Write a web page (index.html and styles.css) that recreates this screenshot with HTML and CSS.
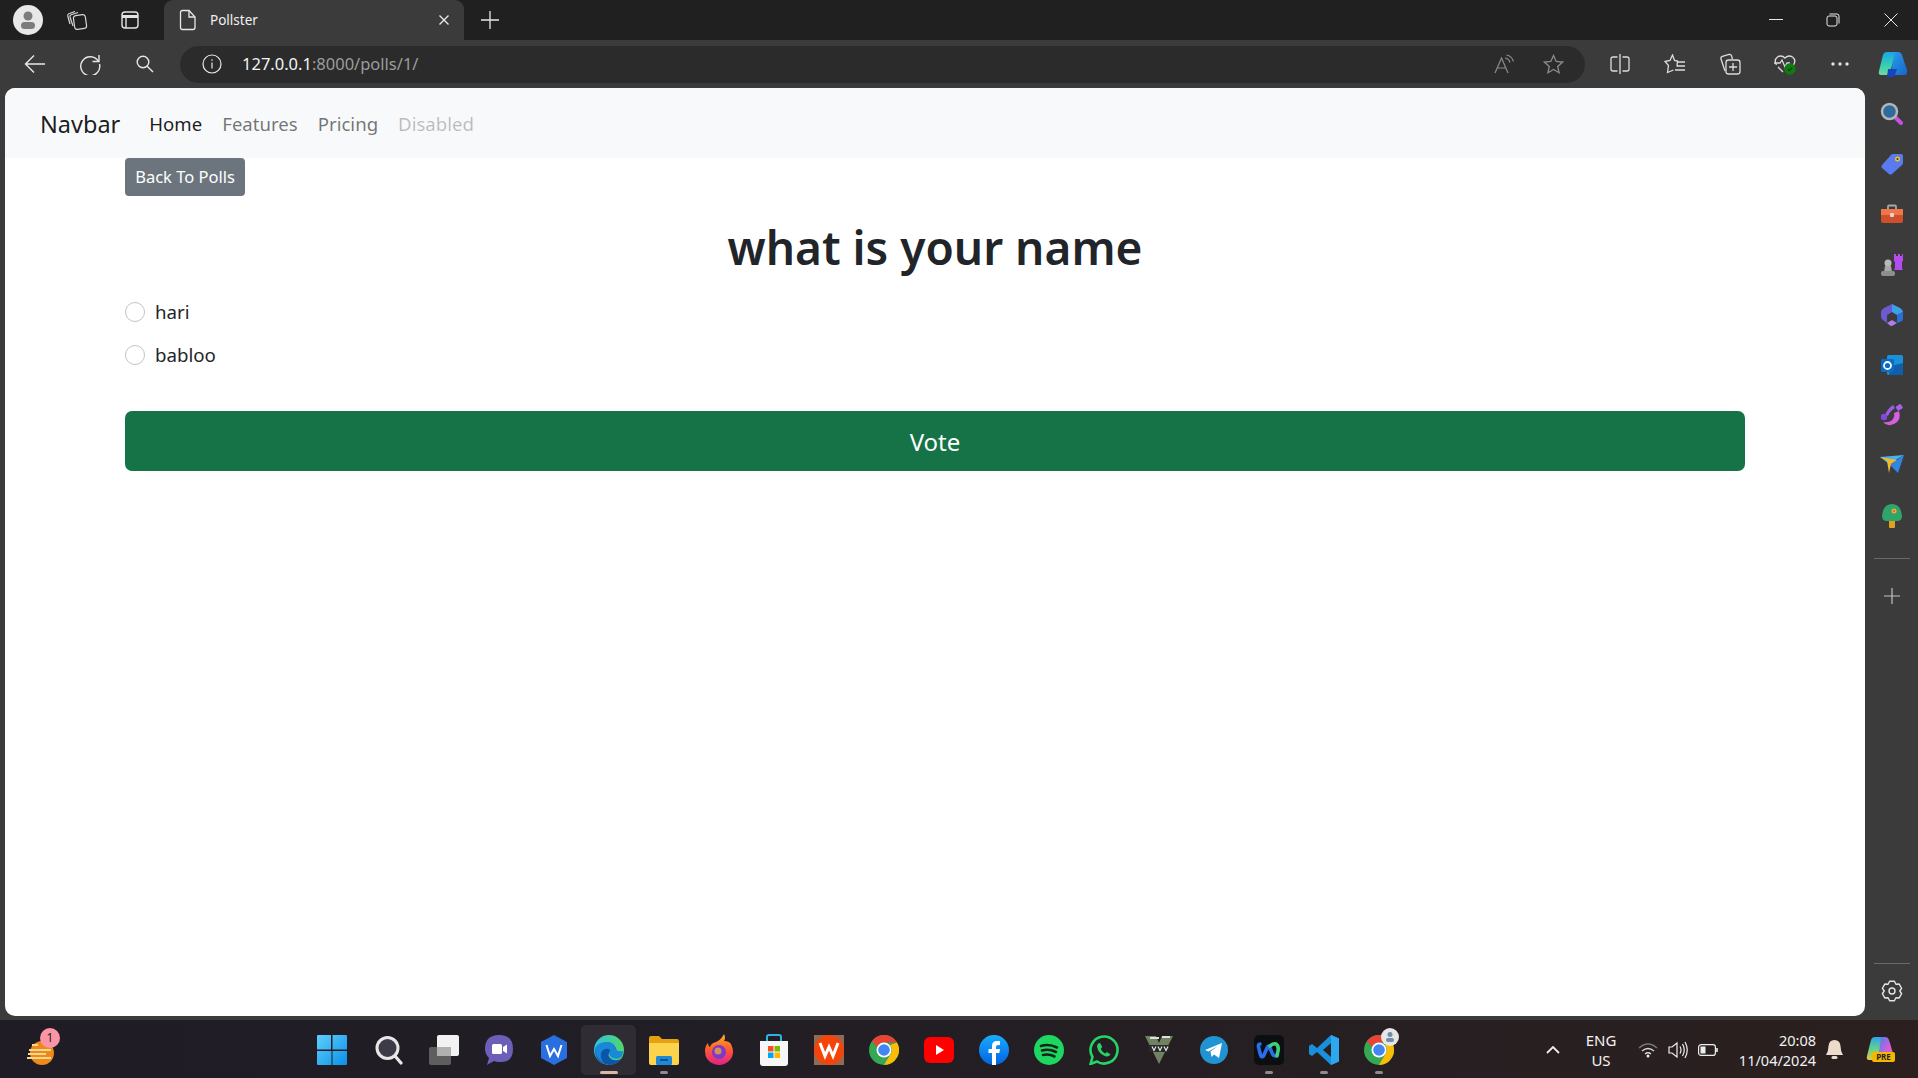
FILE: index.html

```html
<!DOCTYPE html>
<html lang="en">
<head>
  <meta charset="UTF-8" />
  <meta name="viewport" content="width=device-width, initial-scale=1.0" />
  <title>Pollster</title>
  <link rel="stylesheet" href="styles.css">
</head>
<body>
  <!-- browser title bar -->
  <div class="titlebar">
    <div class="cell w-avatar">
      <svg width="30" height="30" viewBox="0 0 30 30"><circle cx="15" cy="15" r="15" fill="#e8e8e8"/><circle cx="15" cy="11" r="4.5" fill="#7c7c7c"/><rect x="8" y="17" width="14" height="7" rx="3.5" fill="#7c7c7c"/></svg>
    </div>
    <div class="cell w-coll">
      <svg width="22" height="22" viewBox="0 0 22 22" fill="none" stroke="#d8d8d8" stroke-width="1.2"><rect x="8" y="6" width="12" height="14" rx="2.5" transform="rotate(-8 14 13)"/><path d="M7 17 4 8q-.4-1.800 1.200-2.300L12 3.500"/><path d="M4 15 1.800 7q-.4-1.600 1-2.200L9 2.500"/></svg>
    </div>
    <div class="cell w-tabs">
      <svg width="20" height="20" viewBox="0 0 20 20" fill="none" stroke="#e4e4e4" stroke-width="1.400"><rect x="2" y="2" width="16" height="16" rx="3"/><path d="M6 7v11" /><path d="M2 6.500h16" stroke-width="3"/></svg>
    </div>
    <div class="tab">
      <svg width="18" height="22" viewBox="0 0 18 22" fill="none" stroke="#e8e8e8" stroke-width="1.300"><path d="M3.500 1.500h6.500l6 6.500v10.500q0 2-2 2h-10.500q-2 0-2-2v-15q0-2 2-2z"/><path d="M10 1.500v6.500h6"/></svg>
      <span class="tab-title">Pollster</span>
      <svg class="tab-close" width="12" height="12" viewBox="0 0 12 12" stroke="#e8e8e8" stroke-width="1.400"><path d="M1.500 1.500l9 9M10.500 1.500l-9 9"/></svg>
    </div>
    <div class="cell w-plus">
      <svg width="18" height="18" viewBox="0 0 18 18" stroke="#e8e8e8" stroke-width="1.300"><path d="M9 0v18M0 9h18"/></svg>
    </div>
    <div class="window-btns">
      <div class="win-btn"><svg width="14" height="14" viewBox="0 0 14 14" stroke="#e8e8e8" stroke-width="1"><path d="M0 6.500h14"/></svg></div>
      <div class="win-btn"><svg width="14" height="14" viewBox="0 0 14 14" fill="none" stroke="#e8e8e8" stroke-width="1"><rect x="1" y="3" width="10" height="10" rx="2"/><path d="M3.500 1h7.500q2 0 2 2v7.500"/></svg></div>
      <div class="win-btn"><svg width="14" height="14" viewBox="0 0 14 14" stroke="#e8e8e8" stroke-width="1"><path d="M.5.500l13 13M13.500.500l-13 13"/></svg></div>
    </div>
  </div>

  <!-- address bar row -->
  <div class="toolbar">
    <div class="tool">
      <svg width="22" height="20" viewBox="0 0 22 20" fill="none" stroke="#e8e8e8" stroke-width="1.400"><path d="M21 10H1.500M10 1.500 1.500 10l8.500 8.500"/></svg>
    </div>
    <div class="tool">
      <svg width="22" height="22" viewBox="0 0 22 22" fill="none" stroke="#e8e8e8" stroke-width="1.400"><path d="M19.500 8.500A9.500 9.500 0 1 0 20.500 11"/><path d="M20 2v6.500h-6.500"/></svg>
    </div>
    <div class="tool">
      <svg width="18" height="18" viewBox="0 0 18 18" fill="none" stroke="#e8e8e8" stroke-width="1.400"><circle cx="7" cy="7" r="5.800"/><path d="M11.200 11.200 17 17"/></svg>
    </div>
    <div class="address">
      <svg width="20" height="20" viewBox="0 0 20 20" fill="none" stroke="#e8e8e8" stroke-width="1.200"><circle cx="10" cy="10" r="9"/><path d="M10 8.500v6M10 5.300v1.400"/></svg>
      <span class="url"><span class="url-host">127.0.0.1</span>:8000/polls/1/</span>
      <div class="address-right">
        <svg width="20" height="20" viewBox="0 0 20 20" fill="none" stroke="#8c8c8c" stroke-width="1.200"><path d="M1 19 7.500 4 14 19M3.500 14h8"/><path d="M11 4q4 .5 5 4.500M12.500 1q5.500 1 7 6.500"/></svg>
        <svg width="21" height="21" viewBox="0 0 21 21" fill="none" stroke="#8c8c8c" stroke-width="1.300"><path d="M10.500 1.500l2.700 6 6.300.6-4.800 4.300 1.400 6.400-5.600-3.300-5.600 3.300 1.400-6.400-4.800-4.300 6.300-.6z"/></svg>
      </div>
    </div>
    <div class="tool-group">
      <div class="tool">
        <svg width="20" height="20" viewBox="0 0 20 20" fill="none" stroke="#dcdcdc" stroke-width="1.300"><path d="M10 0v20M7.500 3H3q-2 0-2 2v10q0 2 2 2h4.500M12.500 3H17q2 0 2 2v10q0 2-2 2h-4.500"/></svg>
      </div>
      <div class="tool">
        <svg width="22" height="20" viewBox="0 0 22 20" fill="none" stroke="#dcdcdc" stroke-width="1.300"><path d="M13 12.500 13.500 7l-3-.5L8.500 1 6 6.500 1 7.500 4.500 11.500 3.500 18.500 9.500 16"/><path d="M13 8h8M13 12h8M11 16h10"/></svg>
      </div>
      <div class="tool">
        <svg width="22" height="22" viewBox="0 0 22 22" fill="none" stroke="#dcdcdc" stroke-width="1.300"><path d="M6 18 2 6q-.6-2 1.400-2.600L10 1.500q2-.5 2.600 1.500l.8 3"/><rect x="7" y="7" width="14" height="14" rx="2.500"/><path d="M14 10v8M10 14h8"/></svg>
      </div>
      <div class="tool">
        <svg width="22" height="22" viewBox="0 0 22 22" fill="none" stroke="#dcdcdc" stroke-width="1.300"><path d="M2.500 12q-3-5 1-8 4-2.500 7.500 1 3.500-3.500 7.500-1 4 3 1 8"/><path d="M0 10h6l2-3 3 7 2-4h3M4 14l5 5"/><circle cx="16" cy="16" r="5" fill="#107c10" stroke="#107c10"/><path d="M13.800 16l1.600 1.600 2.800-3" stroke="#0d3d0d"/></svg>
      </div>
      <div class="tool">
        <svg width="18" height="4" viewBox="0 0 18 4" fill="#e0e0e0"><circle cx="2" cy="2" r="1.700"/><circle cx="9" cy="2" r="1.700"/><circle cx="16" cy="2" r="1.700"/></svg>
      </div>
      <div class="tool last">
        <svg width="30" height="27" viewBox="0 0 30 27">
          <defs>
            <linearGradient id="cpA" x1="0" y1="0" x2="0" y2="1"><stop offset="0" stop-color="#1aa6e8"/><stop offset=".6" stop-color="#37d0b0"/><stop offset="1" stop-color="#7ad89a"/></linearGradient>
            <linearGradient id="cpB" x1="0" y1="0" x2="1" y2="1"><stop offset="0" stop-color="#2aa5f0"/><stop offset="1" stop-color="#1467d8"/></linearGradient>
          </defs>
          <path d="M9 1h9l-6 20q-1 3-4 3H3q-3 0-2-4L5 4q1-3 4-3z" fill="url(#cpA)"/>
          <path d="M16 1h4q3 0 4 3l5 15q1 5-3 5H13z" fill="url(#cpB)" opacity=".95"/>
          <path d="M10 18h9l-2 6q-1 2-3 2h-5z" fill="#1347c0"/>
        </svg>
      </div>
    </div>
  </div>

  <div class="middle">
    <div class="page">
      <nav class="navbar">
        <a class="navbar-brand" href="#">Navbar</a>
        <a class="nav-link active" href="#">Home</a>
        <a class="nav-link" href="#">Features</a>
        <a class="nav-link" href="#">Pricing</a>
        <a class="nav-link disabled" href="#">Disabled</a>
      </nav>
      <div class="container">
        <a class="btn-back" href="#">Back To Polls</a>
        <h1 class="question">what is your name</h1>
        <form class="poll-form">
          <label class="choice"><span class="radio"></span>hari</label>
          <label class="choice"><span class="radio"></span>babloo</label>
          <button class="btn-vote" type="button">Vote</button>
        </form>
      </div>
    </div>

    <!-- edge sidebar -->
    <aside class="sidebar">
      <div class="side-icon">
        <svg width="24" height="24" viewBox="0 0 24 24"><path d="M14 14l7 7" stroke="#c94fe0" stroke-width="4" stroke-linecap="round"/><circle cx="9.500" cy="9.500" r="7.500" fill="#2b6c9c" stroke="#b4b4b4" stroke-width="2.500"/></svg>
      </div>
      <div class="side-icon">
        <svg width="24" height="24" viewBox="0 0 24 24"><path d="M13 2h8q2 0 2 2v7q0 1-1 2L12 22q-1.500 1-3 0l-7-6q-1.500-1.500 0-3L11 3q1-1 2-1z" fill="#5a7af0"/><circle cx="17.500" cy="7" r="2.500" fill="#f5c518"/><circle cx="17.500" cy="7" r="1" fill="#333"/></svg>
      </div>
      <div class="side-icon">
        <svg width="24" height="20" viewBox="0 0 24 20"><path d="M8 5V2.500q0-1 1-1h6q1 0 1 1V5" fill="none" stroke="#a8a8a8" stroke-width="1.800"/><rect x="1" y="5" width="22" height="6" fill="#f0764a"/><path d="M1 11h22v6q0 2-2 2H3q-2 0-2-2z" fill="#cf4f2a"/><rect x="10" y="9" width="4" height="4" rx="1" fill="#d8d8d8"/></svg>
      </div>
      <div class="side-icon">
        <svg width="24" height="24" viewBox="0 0 24 24"><path d="M14 1h2v2h2V1h2v2h2V1h1v7l-1 1v6l1 2H14l1-2V9l-1-1z" fill="#b44cf0"/><circle cx="8" cy="10" r="3.500" fill="#b8b8b8"/><path d="M5 13h6l1 6H4z" fill="#a8a8a8"/><rect x="1" y="18" width="14" height="5" rx="2" fill="#8e8e8e"/></svg>
      </div>
      <div class="side-icon">
        <svg width="24" height="24" viewBox="0 0 24 24"><path d="M12 1l8 4q3 2 3 4l-6 3-5-3z" fill="#3aa0e8"/><path d="M23 9v7q0 2-3 3l-3 1v-8z" fill="#2d6fd8"/><path d="M4 5l8-4v8l-5 3v8l-3-2q-3-2-3-4V9q0-2 3-4z" fill="#6d5ad0"/><path d="M7 20l5-3 5 3-5 3q-1 0-2-.5z" fill="#b07ce8"/></svg>
      </div>
      <div class="side-icon">
        <svg width="24" height="24" viewBox="0 0 24 24"><rect x="7" y="2" width="16" height="20" rx="1.500" fill="#1a90d8"/><path d="M11 13l12-3v12H9z" fill="#0f5fa8"/><rect x="1" y="6" width="13" height="13" rx="1.500" fill="#0a6cc4"/><circle cx="7.500" cy="12.500" r="3.500" fill="none" stroke="#fff" stroke-width="1.800"/></svg>
      </div>
      <div class="side-icon">
        <svg width="24" height="24" viewBox="0 0 24 24"><path d="M5 12Q8 5 13 2l2 3q-5 3-7 8z" fill="#9a5ce8"/><path d="M19 8q3 9-5 13-7 3-11-2 7 1 10-3 2-3 1-6z" fill="#d860e0"/><circle cx="4" cy="14" r="3.200" fill="#8048e0"/><rect x="16" y="2" width="6" height="5" rx="1" fill="#a860f0" transform="rotate(-35 19 4)"/></svg>
      </div>
      <div class="side-icon">
        <svg width="24" height="20" viewBox="0 0 24 20"><path d="M0 2 24 0 9 9z" fill="#42b4f0"/><path d="M24 0 18 18 10 10z" fill="#2f86e6"/><path d="M0 2l7 4 2 12 2-9 6-4z" fill="#f4b82a"/></svg>
      </div>
      <div class="side-icon">
        <svg width="24" height="26" viewBox="0 0 24 26"><rect x="9" y="17" width="6" height="8" rx="1" fill="#e0a020"/><path d="M12 1q9 0 10 12 0 5-5 5H7q-5 0-5-5Q3 1 12 1z" fill="#2fa56c"/><circle cx="14" cy="8" r="2.500" fill="#f4a83a"/><circle cx="14" cy="8" r="1" fill="#e85a2a"/></svg>
      </div>
      <div class="side-divider"></div>
      <div class="side-icon">
        <svg width="16" height="16" viewBox="0 0 16 16" stroke="#c4c4c4" stroke-width="1.200"><path d="M8 0v16M0 8h16"/></svg>
      </div>
      <div class="side-bottom">
        <div class="side-divider"></div>
        <div class="side-icon">
          <svg width="22" height="22" viewBox="0 0 22 22" fill="none" stroke="#e4e4e4" stroke-width="1.400" stroke-linejoin="round"><circle cx="11" cy="11" r="3"/><path d="M8.600 1.300h4.800l1.500 2.950 3.300-.2 2.400 4.200L18.800 11l1.800 2.750-2.400 4.200-3.300-.2-1.500 2.950H8.600l-1.500-2.950-3.300.2-2.400-4.200L3.200 11 1.400 8.250l2.400-4.200 3.300.2z"/></svg>
        </div>
      </div>
    </aside>
  </div>

  <!-- windows taskbar -->
  <footer class="taskbar">
    <div class="weather">
      <svg width="34" height="32" viewBox="0 0 34 32"><circle cx="17" cy="19" r="12" fill="#ee8a1a"/><path d="M7 11h6M4 16h22M3 20h18M2 24h24" stroke="#f6d890" stroke-width="2.200"/></svg>
      <span class="weather-badge">1</span>
    </div>
    <div class="apps">
      <div class="app">
        <svg class="start-logo" width="30" height="30" viewBox="0 0 30 30"><defs><linearGradient id="win" x1="0" y1="0" x2="1" y2="1"><stop offset="0" stop-color="#5fd0fb"/><stop offset="1" stop-color="#0a8fe8"/></linearGradient></defs><path d="M0 1q0-1 1-1h13v14.500H0zM15.500 0H29q1 0 1 1v13.500H15.500zM0 16h14.500v14H1q-1 0-1-1zM15.500 16H30v13q0 1-1 1H15.500z" fill="url(#win)"/></svg>
      </div>
      <div class="app">
        <svg width="28" height="30" viewBox="0 0 28 30" fill="none"><circle cx="12.500" cy="13" r="10.500" fill="#3e3b48" stroke="#e8e8e8" stroke-width="3"/><path d="M20 21l6 7" stroke="#e8e8e8" stroke-width="3.200" stroke-linecap="round"/></svg>
      </div>
      <div class="app">
        <svg width="30" height="30" viewBox="0 0 30 30"><rect x="0" y="12" width="22" height="18" rx="2" fill="#5e5e5e"/><rect x="8" y="0" width="22" height="21" rx="2" fill="#f2f2f2"/><rect x="8" y="12" width="14" height="9" fill="#b0b0b0"/></svg>
      </div>
      <div class="app">
        <svg width="30" height="32" viewBox="0 0 30 32"><path d="M15 1q14 0 14 14T15 28q-3 0-5-1l-7 4 2-7Q1 20 1 15 1 1 15 1z" fill="#6b5fb8"/><rect x="8" y="10" width="10" height="10" rx="1.500" fill="#fff"/><path d="M19 13l4-2.500v9L19 17z" fill="#fff"/></svg>
      </div>
      <div class="app">
        <svg width="28" height="30" viewBox="0 0 28 30"><path d="M14 0l13 7v16l-13 7-13-7V7z" fill="#2a6fe0"/><path d="M6.500 10 10 21l4-7 4 7 3.500-11" fill="none" stroke="#fff" stroke-width="2"/></svg>
      </div>
      <div class="app active">
        <svg width="30" height="30" viewBox="0 0 30 30"><defs><linearGradient id="edgeA" x1="0" y1="0" x2="1" y2="0"><stop offset="0" stop-color="#2ec2e0"/><stop offset="1" stop-color="#53d66a"/></linearGradient></defs><circle cx="15" cy="15" r="15" fill="url(#edgeA)"/><path d="M1 15Q1 28 15 30q8 0 12-6-7 3-11-1-3-3 0-6 3-2 7 0Q21 7 13 7 4 8 1 15z" fill="#0d55a8"/><path d="M1 13Q5 6 14 7q6 1 8 7 1 3 7 2 0 5-3 7-5 2-9-1-3-3-1-7-2-2-5-1-3 1-4 4-1 6 3 10Q1 24 1 13z" fill="#1a87d8"/></svg>
      </div>
      <div class="app open">
        <svg width="30" height="30" viewBox="0 0 30 30"><path d="M0 3q0-2 2-2h8l3 3h15q2 0 2 2v3H0z" fill="#e8a010"/><path d="M0 8h30v20q0 2-2 2H2q-2 0-2-2z" fill="#fcd34d"/><rect x="7" y="21" width="16" height="9" rx="1.500" fill="#1e88d8"/><path d="M11 25h8" stroke="#0d3f70" stroke-width="1.500"/></svg>
      </div>
      <div class="app">
        <svg width="30" height="32" viewBox="0 0 30 32"><defs><linearGradient id="ffx" x1="0" y1="0" x2="0" y2="1"><stop offset="0" stop-color="#ffb020"/><stop offset=".5" stop-color="#ff5a30"/><stop offset="1" stop-color="#e0208c"/></linearGradient></defs><path d="M27 10q5 10-2 17-7 6-15 3Q1 27 1 17q0-5 3-8 0 3 2 4 1-4 6-5 5-2 8-8 2 4 0 7 5 0 7 3z" fill="url(#ffx)"/><circle cx="15" cy="18" r="7" fill="#7a3ad0"/><circle cx="14" cy="17" r="3.500" fill="#ffb020" opacity=".7"/></svg>
      </div>
      <div class="app">
        <svg width="30" height="34" viewBox="0 0 30 34"><path d="M8 8V4q0-2 2-2h10q2 0 2 2v4" fill="none" stroke="#2bb4e8" stroke-width="2"/><path d="M1 8h28v22q0 3-3 3H4q-3 0-3-3z" fill="#f6f6f6"/><rect x="9" y="13" width="5.500" height="5.500" fill="#f25022"/><rect x="15.500" y="13" width="5.500" height="5.500" fill="#7fba00"/><rect x="9" y="19.500" width="5.500" height="5.500" fill="#00a4ef"/><rect x="15.500" y="19.500" width="5.500" height="5.500" fill="#ffb900"/></svg>
      </div>
      <div class="app">
        <svg width="30" height="30" viewBox="0 0 30 30"><rect width="30" height="30" fill="#8f6a55"/><ellipse cx="15" cy="15" rx="15" ry="15" fill="#f5440a"/><path d="M6 8l5 13 4-9 4 9 5-13" fill="none" stroke="#fff" stroke-width="3"/></svg>
      </div>
      <div class="app">
        <svg width="30" height="30" viewBox="0 0 30 30"><circle cx="15" cy="15" r="15" fill="#34a853"/><path d="M15 0a15 15 0 0 1 13 7.500H15A7.500 7.500 0 0 0 8 12L3 6a15 15 0 0 1 12-6z" fill="#ea4335"/><path d="M28 7.500A15 15 0 0 1 15 30l6.500-11A7.500 7.500 0 0 0 21 10z" fill="#fbbc05"/><circle cx="15" cy="15" r="7.500" fill="#fff"/><circle cx="15" cy="15" r="5.800" fill="#4285f4"/></svg>
      </div>
      <div class="app">
        <svg width="30" height="28" viewBox="0 0 30 28"><rect y="1" width="30" height="26" rx="6" fill="#f00"/><path d="M12 9v10l8-5z" fill="#fff"/></svg>
      </div>
      <div class="app">
        <svg width="30" height="30" viewBox="0 0 30 30"><defs><linearGradient id="fb" x1="0" y1="0" x2="0" y2="1"><stop offset="0" stop-color="#18acfe"/><stop offset="1" stop-color="#0163e0"/></linearGradient></defs><circle cx="15" cy="15" r="15" fill="url(#fb)"/><path d="M13 30V18H9.500v-4H13v-3q0-5 5-5h3v4h-2q-2 0-2 2v2h4l-.7 4H17v12z" fill="#fff"/></svg>
      </div>
      <div class="app">
        <svg width="30" height="30" viewBox="0 0 30 30" fill="none"><circle cx="15" cy="15" r="15" fill="#1ed760"/><path d="M7 11q8-2.500 16 1.500M8 15.500q7-2 14 1.500M9 20q6-1.500 11.500 1.500" stroke="#15241b" stroke-width="2.600" stroke-linecap="round"/></svg>
      </div>
      <div class="app">
        <svg width="30" height="30" viewBox="0 0 30 30" fill="none"><path d="M1.500 29 3.500 22A13.500 13.500 0 1 1 8 26.500z" stroke="#25d366" stroke-width="2.600"/><path d="M10 8q-2 1-2 3.500 1 7 9 10 3 .5 4.500-2l-3.500-2.500-1.800 1.500q-3-1.500-4.500-4.500l1.500-2L11.500 8.500z" fill="#25d366"/></svg>
      </div>
      <div class="app">
        <svg width="30" height="32" viewBox="0 0 30 32"><path d="M1 2h11l3 7 3-7h11l-14 28z" fill="#6f8360"/><rect x="5" y="11" width="20" height="7" fill="#2a2a2a"/><path d="M6 4h9M18 3h8" stroke="#dedede" stroke-width="2"/><path d="M8 12.500l2 4 2-4M14 12.500l2 4 2-4M20 12.500l2 4 2-4" stroke="#e8e8e8" stroke-width="1.200" fill="none"/></svg>
      </div>
      <div class="app">
        <svg width="28" height="28" viewBox="0 0 28 28"><circle cx="14" cy="14" r="14" fill="#2293d2"/><path d="M5 14 22 7l-3 15-5-3.500-2.500 2.500-1-5.500L18 10l-9.500 5.500z" fill="#fff"/></svg>
      </div>
      <div class="app open">
        <svg width="30" height="30" viewBox="0 0 30 30" fill="none"><rect width="30" height="30" rx="5" fill="#0c0f12"/><path d="M6 9q-2 0-1.500 3l2 8q1 3 3 1l4-9q1-2 2 0l3 7q2 3 4 1" stroke="#2a6ef0" stroke-width="3.600" stroke-linecap="round"/><path d="M16 11q3-3 6-2 3 2 2 7l-1 5" stroke="#3bd17a" stroke-width="3.600" stroke-linecap="round"/></svg>
      </div>
      <div class="app open">
        <svg width="30" height="30" viewBox="0 0 30 30"><path d="M22 0l8 3.500v23L22 30 8 17l-5 4-3-2V11l3-2 5 4z" fill="#1a8fdc"/><path d="M22 0v30l8-3.500v-23z" fill="#2ba8ee"/><path d="M22 8l-8 7 8 7z" fill="#272220"/></svg>
      </div>
      <div class="app open">
        <svg width="30" height="30" viewBox="0 0 30 30"><circle cx="15" cy="15" r="15" fill="#34a853"/><path d="M15 0a15 15 0 0 1 13 7.500H15A7.500 7.500 0 0 0 8 12L3 6a15 15 0 0 1 12-6z" fill="#ea4335"/><path d="M28 7.500A15 15 0 0 1 15 30l6.500-11A7.500 7.500 0 0 0 21 10z" fill="#fbbc05"/><circle cx="15" cy="15" r="7.500" fill="#fff"/><circle cx="15" cy="15" r="5.800" fill="#4285f4"/></svg>
        <svg class="chrome-badge" width="18" height="18" viewBox="0 0 18 18"><circle cx="9" cy="9" r="9" fill="#e6e6e6"/><circle cx="9" cy="6.500" r="2.500" fill="#6f8ca8"/><rect x="5" y="10" width="8" height="4" rx="2" fill="#6f8ca8"/></svg>
      </div>
    </div>
    <div class="tray">
      <svg class="tray-chevron" width="14" height="8" viewBox="0 0 14 8" fill="none" stroke="#eee" stroke-width="1.800"><path d="M1 7l6-6 6 6"/></svg>
      <div class="lang"><span>ENG</span><span>US</span></div>
      <div class="tray-icons">
        <svg width="20" height="16" viewBox="0 0 20 16" fill="none"><path d="M1 6q9-8 18 0" stroke="#777" stroke-width="1.200"/><path d="M4 9q6-5 12 0M7 12q3-2.500 6 0" stroke="#ddd" stroke-width="1.300"/><circle cx="10" cy="14" r="1.500" fill="#eee"/></svg>
        <svg width="20" height="18" viewBox="0 0 20 18" fill="none" stroke="#eee" stroke-width="1.200"><path d="M1 6h3l5-4v14l-5-4H1z"/><path d="M12 5.500q2 3.500 0 7M14.500 3q3.500 6 0 12M17 1q4.500 8 0 16"/></svg>
        <svg width="20" height="12" viewBox="0 0 20 12" fill="none" stroke="#eee" stroke-width="1.200"><rect x=".6" y=".6" width="16.800" height="10.800" rx="2.500"/><rect x="2.500" y="2.500" width="5" height="7" fill="#eee" stroke="none"/><path d="M19 4v4" stroke-width="1.600"/></svg>
      </div>
      <div class="clock"><span>20:08</span><span>11/04/2024</span></div>
      <svg class="bell" width="17" height="20" viewBox="0 0 17 20"><path d="M8.500 0q5.500 0 6 6 0 5 2.500 9H0q2.500-4 2.500-9 .5-6 6-6z" fill="#ecdccb"/><rect x="5.500" y="16" width="6" height="3" rx="1.500" fill="#ecdccb"/></svg>
      <div class="copilot-pre">
        <svg width="28" height="26" viewBox="0 0 28 26">
          <defs>
            <linearGradient id="cpC" x1="0" y1="0" x2="0" y2="1"><stop offset="0" stop-color="#2aa5f0"/><stop offset=".5" stop-color="#63d08a"/><stop offset="1" stop-color="#e8c840"/></linearGradient>
            <linearGradient id="cpD" x1="0" y1="0" x2="1" y2="1"><stop offset="0" stop-color="#4a7cf0"/><stop offset=".6" stop-color="#d060d8"/><stop offset="1" stop-color="#f06890"/></linearGradient>
          </defs>
          <path d="M9 0h9l-6 20q-1 3-4 3H3q-3 0-2-4L5 3q1-3 4-3z" fill="url(#cpC)"/>
          <path d="M15 0h4q3 0 4 3l4 13q1 6-3 7H12z" fill="url(#cpD)"/>
        </svg>
        <span class="pre-badge">PRE</span>
      </div>
    </div>
  </footer>
</body>
</html>
```

FILE: styles.css

```css
html, body {
  height: 100%;
}
body {
  margin: 0;
  width: 1918px;
  height: 1078px;
  overflow: hidden;
  display: flex;
  flex-direction: column;
  background: #3b3b3b;
  font-family: 'Noto Sans', 'Open Sans', sans-serif;
  color: #212529;
}
a {
  text-decoration: none;
}
svg {
  display: block;
  flex: none;
}

/* title bar */
.titlebar {
  height: 40px;
  flex: none;
  display: flex;
  align-items: stretch;
  background: #202020;
}
.cell {
  display: flex;
  align-items: center;
  justify-content: center;
}
.w-avatar {
  width: 56px;
}
.w-coll {
  width: 42px;
}
.w-tabs {
  width: 64px;
}
.w-plus {
  width: 52px;
}
.tab {
  width: 300px;
  margin-left: 2px;
  box-sizing: border-box;
  padding: 0 14px 0 15px;
  display: flex;
  align-items: center;
  background: #3b3b3b;
  border-radius: 9px 9px 0 0;
  color: #f0f0f0;
}
.tab-title {
  margin-left: 13px;
  font-size: 13.5px;
  flex: 1;
}
.window-btns {
  margin-left: auto;
  display: flex;
}
.win-btn {
  width: 57.500px;
  display: flex;
  align-items: center;
  justify-content: center;
}
.win-btn:last-child {
  width: 54px;
  margin-left: 2px;
}

/* toolbar */
.toolbar {
  height: 48px;
  flex: none;
  box-sizing: border-box;
  padding-left: 7px;
  display: flex;
  align-items: center;
  background: #3b3b3b;
}
.tool {
  width: 55px;
  height: 48px;
  flex: none;
  display: flex;
  align-items: center;
  justify-content: center;
}
.tool.last {
  width: 51px;
}
.tool-group {
  display: flex;
}
.address {
  flex: 1;
  height: 37px;
  margin: 0 7px 0 8px;
  padding: 0 21px 0 22px;
  display: flex;
  align-items: center;
  background: #2b2b2b;
  border-radius: 19px;
}
.url {
  margin-left: 20px;
  font-size: 16.5px;
  line-height: 36px;
  height: 37px;
  color: #9c9c9c;
}
.url-host {
  color: #f4f4f4;
}
.address-right {
  margin-left: auto;
  display: flex;
  align-items: center;
  gap: 29px;
}

/* page area */
.middle {
  height: 928px;
  flex: none;
  display: flex;
}
.page {
  width: 1860px;
  margin-left: 5px;
  background: #fff;
  border-radius: 10px;
  overflow: hidden;
}
.navbar {
  height: 70px;
  box-sizing: border-box;
  padding: 1px 0 0 35px;
  display: flex;
  align-items: center;
  background: #f8f9fa;
}
.navbar-brand {
  margin-right: 19px;
  font-size: 23.500px;
  color: rgba(0, 0, 0, .9);
}
.nav-link {
  padding: 0 10px;
  font-size: 18.600px;
  color: rgba(0, 0, 0, .55);
}
.nav-link.active {
  color: rgba(0, 0, 0, .9);
}
.nav-link.disabled {
  color: rgba(0, 0, 0, .25);
}
.container {
  width: 1620px;
  margin: 0 auto;
}
.btn-back {
  display: block;
  width: 120px;
  height: 38px;
  line-height: 37px;
  text-align: center;
  font-size: 16.5px;
  color: #fff;
  background: #6c757d;
  border-radius: 4px;
}
.question {
  margin: 22px 0 12px;
  text-align: center;
  font-size: 46px;
  line-height: 59px;
  padding-bottom: 1px;
  font-weight: 600;
}
.poll-form {
  display: flex;
  flex-direction: column;
}
.choice {
  height: 43px;
  display: flex;
  align-items: center;
  gap: 10px;
  font-size: 18.700px;
}
.radio {
  width: 20px;
  height: 20px;
  box-sizing: border-box;
  background: #fff;
  border: 1px solid #bfc3c7;
  border-radius: 50%;
}
.btn-vote {
  height: 60px;
  margin-top: 35px;
  padding: 0;
  border: none;
  border-radius: 7px;
  background: #157347;
  color: #fff;
  font-family: inherit;
  font-size: 24px;
}

/* sidebar */
.sidebar {
  flex: 1;
  padding-top: 1px;
  display: flex;
  flex-direction: column;
  align-items: center;
}
.side-icon {
  height: 50.200px;
  display: flex;
  align-items: center;
  justify-content: center;
}
.side-divider {
  width: 36px;
  height: 1px;
  margin: 17px 0 12px;
  background: #6a6a6a;
}
.side-bottom {
  margin-top: auto;
  padding-bottom: 0;
  display: flex;
  flex-direction: column;
  align-items: center;
}
.side-bottom .side-divider {
  margin: 0 0 2px;
}

/* taskbar */
.taskbar {
  height: 58px;
  margin-top: 4px;
  box-sizing: border-box;
  padding-top: 2px;
  flex: none;
  display: flex;
  align-items: center;
  position: relative;
  background: linear-gradient(90deg, #1f1c26 0%, #221e24 45%, #2b201f 100%);
  color: #f2f2f2;
}
.weather {
  width: 34px;
  height: 32px;
  margin-left: 25px;
  position: relative;
}
.weather-badge {
  position: absolute;
  top: -6px;
  left: 15px;
  width: 20px;
  height: 20px;
  border-radius: 50%;
  background: #fb95a5;
  color: #222;
  font-size: 12px;
  line-height: 20px;
  text-align: center;
}
.apps {
  margin-left: 247px;
  display: flex;
}
.app {
  width: 55px;
  height: 50px;
  display: flex;
  align-items: center;
  justify-content: center;
  position: relative;
  border-radius: 5px;
}
.start-logo {
  margin-left: -3px;
}
.app.active {
  background: #2f2c33;
}
.app.active::after, .app.open::after {
  content: "";
  position: absolute;
  bottom: 1px;
  left: 50%;
  width: 8px;
  height: 3px;
  margin-left: -4px;
  border-radius: 2px;
  background: #8c8c8c;
}
.app.active::after {
  width: 18px;
  margin-left: -9px;
  background: #d8b9a2;
}
.chrome-badge {
  position: absolute;
  top: 3px;
  left: 30px;
}
.tray {
  margin-left: auto;
  width: 392px;
  flex: none;
  display: flex;
  align-items: center;
}
.tray-chevron {
  margin-left: 20px;
}
.lang {
  width: 44px;
  margin-left: 19px;
  display: flex;
  flex-direction: column;
  align-items: center;
  font-size: 15px;
  line-height: 20px;
}
.tray-icons {
  margin-left: 15px;
  display: flex;
  align-items: center;
  gap: 10px;
}
.clock {
  margin-left: 10px;
  width: 88px;
  display: flex;
  flex-direction: column;
  align-items: flex-end;
  font-size: 14.500px;
  line-height: 20px;
}
.bell {
  margin-left: 10px;
}
.copilot-pre {
  margin-left: 23px;
  position: relative;
}
.pre-badge {
  position: absolute;
  top: 15px;
  left: 6px;
  width: 23px;
  height: 10px;
  border-radius: 2px;
  background: #f5b800;
  color: #222;
  font-size: 8px;
  line-height: 10px;
  font-weight: 700;
  text-align: center;
}
```
